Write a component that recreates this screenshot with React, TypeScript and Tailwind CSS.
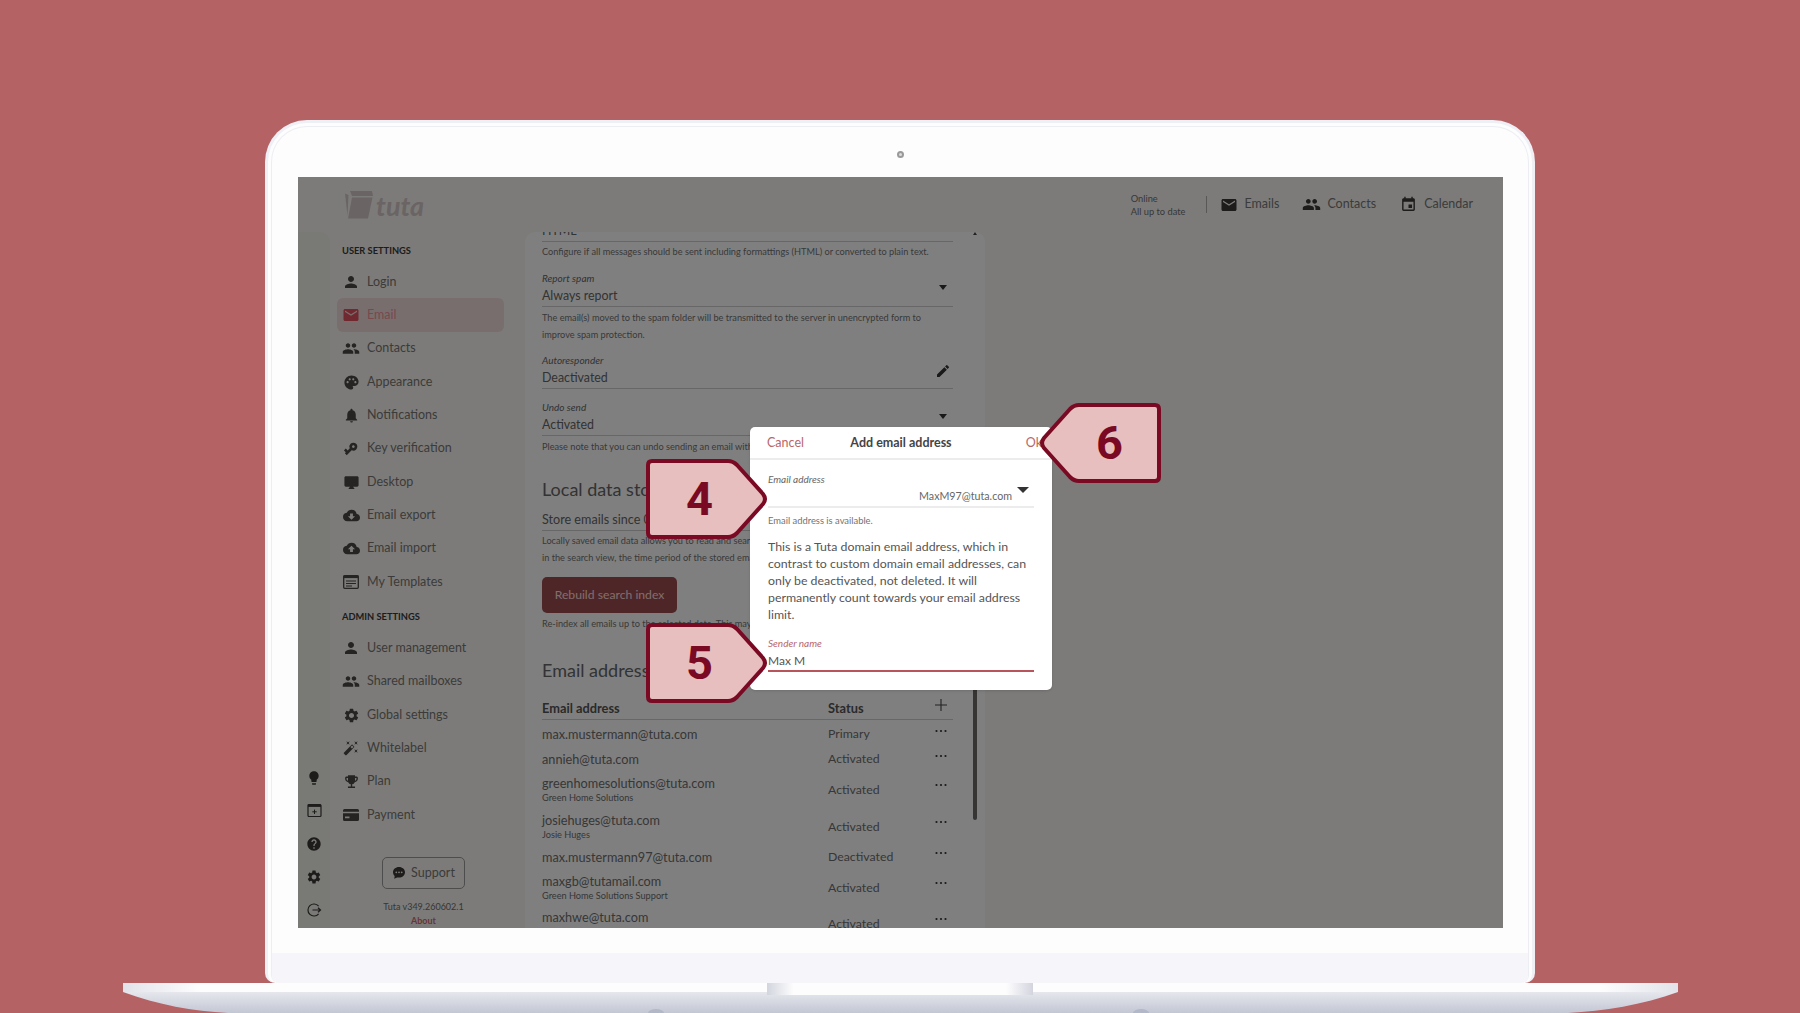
import type { ReactNode } from "react";
import {
  MdAutoFixHigh,
  MdCloudDownload,
  MdCloudUpload,
  MdDesktopMac,
  MdEdit,
  MdEmojiEvents,
  MdEvent,
  MdHelp,
  MdLightbulb,
  MdMail,
  MdNotifications,
  MdPalette,
  MdPeople,
  MdPerson,
  MdSettings,
  MdVpnKey,
} from "react-icons/md";

const TemplatesIcon = () => (
  <svg width="18" height="18" viewBox="0 0 18 18" fill="none" stroke="currentColor">
    <rect x="1.7" y="2.7" width="14.6" height="12.6" rx="1" strokeWidth="1.3" />
    <rect x="1.5" y="2.5" width="15" height="2.6" fill="currentColor" stroke="none" />
    <path d="M4 8h10M4 10.5h10M4 13h6" strokeWidth="1.1" />
  </svg>
);

const CalendarPlusIcon = () => (
  <svg width="15" height="15" viewBox="0 0 15 15" fill="none" stroke="currentColor">
    <rect x="1" y="1.5" width="13" height="12" rx="1" strokeWidth="1.2" />
    <rect x="1" y="1.5" width="13" height="2.4" fill="currentColor" stroke="none" />
    <path d="M7.5 6.6v4.4M5.3 8.8h4.4" strokeWidth="1" />
  </svg>
);

const LogoutIcon = () => (
  <svg width="16" height="16" viewBox="0 0 16 16" fill="none" stroke="currentColor" strokeWidth="1.2">
    <path d="M12.6 4.2A6 6 0 1 0 12.6 11.8" />
    <path d="M6.5 8H14.5M12 5.8L14.5 8L12 10.2" />
  </svg>
);

const CardIcon = () => (
  <svg width="18" height="18" viewBox="0 0 18 18" fill="currentColor">
    <path d="M2.5 3H15.500A1.500 1.500 0 0 1 17 4.500V5.800H1V4.500A1.500 1.500 0 0 1 2.500 3Z" />
    <path d="M1 7.200H17V13.500A1.500 1.500 0 0 1 15.500 15H2.500A1.500 1.500 0 0 1 1 13.500ZM3 10.500V12.300H7.500V10.500Z" fillRule="evenodd" />
  </svg>
);

const BubbleIcon = () => (
  <svg width="14" height="14" viewBox="0 0 14 14">
    <path d="M7 1C3.500 1 1 3.300 1 6.300C1 7.800 1.600 9.100 2.700 10L2.200 12.800L5.100 11.400C5.700 11.500 6.300 11.600 7 11.600C10.500 11.600 13 9.300 13 6.300C13 3.300 10.500 1 7 1Z" fill="currentColor" />
    <circle cx="4.300" cy="6.300" r="0.900" fill="#f8f7f3" />
    <circle cx="7" cy="6.300" r="0.900" fill="#f8f7f3" />
    <circle cx="9.700" cy="6.300" r="0.900" fill="#f8f7f3" />
  </svg>
);

const PlusIcon = () => (
  <svg width="14" height="14" viewBox="0 0 14 14" stroke="currentColor" strokeWidth="1.100">
    <path d="M7 1V13M1 7H13" />
  </svg>
);

const Dots = ({ className }: { className?: string }) => (
  <svg width="14" height="4" viewBox="0 0 14 4" fill="currentColor" className={className}>
    <circle cx="2.500" cy="2" r="1.100" />
    <circle cx="7" cy="2" r="1.100" />
    <circle cx="11.500" cy="2" r="1.100" />
  </svg>
);

const userNav = [
  { label: "Login", icon: <MdPerson size={18} /> },
  { label: "Email", icon: <MdMail size={18} />, active: true },
  { label: "Contacts", icon: <MdPeople size={19} /> },
  { label: "Appearance", icon: <MdPalette size={17} /> },
  { label: "Notifications", icon: <MdNotifications size={17} /> },
  { label: "Key verification", icon: <MdVpnKey size={16} className="rotate-[135deg]" /> },
  { label: "Desktop", icon: <MdDesktopMac size={17} /> },
  { label: "Email export", icon: <MdCloudDownload size={17} /> },
  { label: "Email import", icon: <MdCloudUpload size={17} /> },
  { label: "My Templates", icon: <TemplatesIcon /> },
];

const adminNav = [
  { label: "User management", icon: <MdPerson size={18} /> },
  { label: "Shared mailboxes", icon: <MdPeople size={19} /> },
  { label: "Global settings", icon: <MdSettings size={17} /> },
  { label: "Whitelabel", icon: <MdAutoFixHigh size={16} /> },
  { label: "Plan", icon: <MdEmojiEvents size={17} /> },
  { label: "Payment", icon: <CardIcon /> },
];

const addresses = [
  { email: "max.mustermann@tuta.com", status: "Primary", height: "h-[29px]" },
  { email: "annieh@tuta.com", status: "Activated", height: "h-[21px]" },
  { email: "greenhomesolutions@tuta.com", name: "Green Home Solutions", status: "Activated", height: "h-[40px]" },
  { email: "josiehuges@tuta.com", name: "Josie Huges", status: "Activated", height: "h-[34px]" },
  { email: "max.mustermann97@tuta.com", status: "Deactivated", height: "h-[26px]" },
  { email: "maxgb@tutamail.com", name: "Green Home Solutions Support", status: "Activated", height: "h-[36px]" },
  { email: "maxhwe@tuta.com", name: "Max Hwe", status: "Activated", height: "h-[36px]" },
];

const NavRow = ({ label, icon, active }: { label: string; icon: ReactNode; active?: boolean }) => (
  <div
    className={`ml-[7px] flex h-[33.33px] w-[167px] items-center gap-[7px] rounded-[6px] pl-[5px] pt-[1px] text-[12.5px] ${
      active ? "bg-[#f2dcdc] text-[#f29299]" : "text-[#787674]"
    }`}
  >
    <span className={`flex w-[18px] justify-center ${active ? "text-[#e0525f]" : "text-[#4a4846]"}`}>{icon}</span>
    {label}
  </div>
);

const SectionLabel = ({ children, className }: { children: ReactNode; className?: string }) => (
  <div className={`flex h-[22px] items-center pl-[12px] text-[9.3px] font-bold text-[#3c3a39] ${className ?? ""}`}>
    {children}
  </div>
);

const Field = ({ label, value, trailing, className }: { label: string; value: string; trailing?: ReactNode; className?: string }) => (
  <div className={`relative w-[411px] border-b border-[#cfcfcf] ${className ?? ""}`}>
    <div className="h-[14px] text-[10px] italic leading-[12px] text-[#666]">{label}</div>
    <div className="h-[20px] text-[12.4px] leading-[20px] text-[#666]">{value}</div>
    {trailing && <span className="absolute right-[1px] top-[5px] flex w-[18px] justify-center text-[#333]">{trailing}</span>}
  </div>
);

const Caret = () => <span className="mt-[8px] h-0 w-0 border-x-[4.5px] border-t-[5px] border-x-transparent border-t-[#333]" />;

const Help = ({ children, className }: { children: ReactNode; className?: string }) => (
  <p className={`w-[411px] whitespace-nowrap text-[9.2px] text-[#737373] ${className ?? ""}`}>{children}</p>
);

const Callout = ({ n, flip, className }: { n: string; flip?: boolean; className: string }) => (
  <div className={`absolute h-[80px] w-[122px] ${className}`}>
    <svg width="122" height="80" viewBox="0 0 122 80" className={flip ? "-scale-x-100" : ""}>
      <path
        d="M6 2H82q5 0 9 4L117 35q4 5 0 10L91 74q-4 4-9 4H6q-4 0-4-4V6q0-4 4-4Z"
        fill="#e7bfbe"
        stroke="#7a0a24"
        strokeWidth="4"
        strokeLinejoin="round"
      />
    </svg>
    <span
      className={`absolute inset-y-0 flex items-center text-[47px] font-bold text-[#7a0a24] [font-family:Roboto,sans-serif] ${
        flip ? "right-[38px]" : "left-[40px]"
      }`}
    >
      {n}
    </span>
  </div>
);

const LaptopBase = () => (
  <svg width="1555" height="30" viewBox="0 0 1555 30" className="ml-[123px] block">
    <defs>
      <linearGradient id="deck" x1="0" y1="0" x2="0" y2="1">
        <stop offset="0.3" stopColor="#e6e7ed" />
        <stop offset="1" stopColor="#c3c7d4" />
      </linearGradient>
      <linearGradient id="edge" x1="0" y1="0" x2="1" y2="0">
        <stop offset="0" stopColor="#e2e3ea" />
        <stop offset="0.05" stopColor="#fdfdfe" />
        <stop offset="0.95" stopColor="#fdfdfe" />
        <stop offset="1" stopColor="#e2e3ea" />
      </linearGradient>
      <linearGradient id="notch" x1="0" y1="0" x2="1" y2="0">
        <stop offset="0" stopColor="#d3d5de" />
        <stop offset="0.1" stopColor="#fdfdfe" />
        <stop offset="0.9" stopColor="#fdfdfe" />
        <stop offset="1" stopColor="#d3d5de" />
      </linearGradient>
    </defs>
    <path d="M0 0H1555V9C1520 22 1480 28 1445 30H105C70 28 35 22 0 9Z" fill="url(#deck)" />
    <rect width="1555" height="9" fill="url(#edge)" />
    <rect x="644" width="266" height="12" fill="url(#notch)" />
    <ellipse cx="533" cy="30" rx="8" ry="4" fill="#b3b8c9" />
    <ellipse cx="1018" cy="30" rx="8" ry="4" fill="#b3b8c9" />
  </svg>
);

export default function App() {
  return (
    <div className="h-[1013px] w-[1800px] overflow-hidden bg-[#b56265] pt-[120px] [font-family:Lato,'Noto_Sans',sans-serif]">
      {/* lid */}
      <div className="ml-[265px] h-[863px] w-[1270px] rounded-t-[42px] rounded-b-[10px] border-[3px] border-b-0 border-[#eff0f6] bg-[#fdfdfe] p-[3px] pb-0">
        <div className="flex h-full flex-col rounded-t-[36px] rounded-b-[8px] border border-b-0 border-[#eceef3]">
          <div className="flex h-[50px] items-center justify-center pt-[4px]">
            <span className="h-[7px] w-[7px] rounded-full border-2 border-[#9a9a9a] bg-[#dcdcdc]" />
          </div>
          {/* screen */}
          <div className="relative mx-[26px] h-[751px] w-[1205px] overflow-hidden bg-[#f8f7f3]">
            <header className="flex h-[55px]">
              <div className="ml-[47px] mt-[14px] flex h-[28px] items-center">
                <svg width="29" height="28" viewBox="0 0 29 28" fill="#d6c8c8">
                  <path d="M5 0H27L28 5H7Z" />
                  <path d="M7 6.500H27.500L23 27.500H3Z" />
                  <path d="M0 2.500L3.500 4L2.500 25Z" />
                </svg>
                <span className="ml-[2px] text-[27px] font-bold italic leading-none text-[#d6c8c8]">tuta</span>
              </div>
              <div className="ml-auto mr-[30px] flex items-center text-[#777]">
                <div className="mr-[21px] text-[9.3px] leading-[13px] text-[#707070]">
                  <div>Online</div>
                  <div>All up to date</div>
                </div>
                <span className="mr-[13px] h-[17px] w-px bg-[#b0b0b0]" />
                <MdMail size={18} className="text-[#3a3837]" />
                <span className="ml-[6px] text-[12.5px]">Emails</span>
                <MdPeople size={19} className="ml-[23px] text-[#3a3837]" />
                <span className="ml-[6px] text-[12.5px]">Contacts</span>
                <MdEvent size={17} className="ml-[24px] text-[#3a3837]" />
                <span className="ml-[7px] text-[12.5px]">Calendar</span>
              </div>
            </header>

            <div className="flex h-[696px]">
              {/* left rail */}
              <div className="flex w-[32px] flex-col items-center gap-[17.33px] rounded-tr-[10px] bg-[#f3f2ec] pt-[538px] text-[#3a3837]">
                <MdLightbulb size={16} />
                <CalendarPlusIcon />
                <MdHelp size={16} />
                <MdSettings size={16} />
                <LogoutIcon />
              </div>

              {/* sidebar */}
              <aside className="w-[195px] pt-[8px]">
                <SectionLabel className="mb-[3px]">USER SETTINGS</SectionLabel>
                {userNav.map((item) => (
                  <NavRow key={item.label} {...item} />
                ))}
                <SectionLabel className="mb-[3px] mt-[8px]">ADMIN SETTINGS</SectionLabel>
                {adminNav.map((item) => (
                  <NavRow key={item.label} {...item} />
                ))}
                <div className="ml-[52px] mt-[26px] flex h-[32px] w-[83px] items-center justify-center gap-[5px] rounded-[5px] border border-[#9a9a9a] text-[12.5px] text-[#777]">
                  <span className="text-[#3a3837]">
                    <BubbleIcon />
                  </span>
                  Support
                </div>
                <div className="mt-[11px] h-[14px] w-[187px] text-center text-[9px] leading-[14px] text-[#6e6e6e]">
                  Tuta v349.260602.1
                </div>
                <div className="h-[13px] w-[187px] text-center text-[9px] font-bold leading-[13px] text-[#d06a72]">About</div>
              </aside>

              {/* settings panel */}
              <main className="relative w-[460px] overflow-hidden rounded-t-[10px] bg-white pl-[17px]">
                <div className="flex h-[10px] w-[411px] items-end overflow-hidden border-b border-[#cfcfcf] text-[12.4px] leading-[20px] text-[#666]">
                  <span className="h-[20px] shrink-0">HTML</span>
                </div>
                <Help className="leading-[20px]">Configure if all messages should be sent including formattings (HTML) or converted to plain text.</Help>

                <Field className="mt-[10px]" label="Report spam" value="Always report" trailing={<Caret />} />
                <Help className="mt-[2px] leading-[17px]">
                  The email(s) moved to the spam folder will be transmitted to the server in unencrypted form to
                  <br />
                  improve spam protection.
                </Help>

                <Field className="mt-[11px]" label="Autoresponder" value="Deactivated" trailing={<MdEdit size={16} className="mt-[4px]" />} />
                <Field className="mt-[12px]" label="Undo send" value="Activated" trailing={<Caret />} />
                <Help className="mt-[2px] leading-[17px]">Please note that you can undo sending an email within a time frame.</Help>

                <h2 className="mt-[20px] h-[30px] text-[18px] leading-[28px] text-[#666]">Local data storage</h2>
                <div className="mt-[5px] h-[21px] w-[411px] border-b border-[#cfcfcf] text-[12.6px] leading-[20px] text-[#666]">Store emails since 01/01/2025</div>
                <Help className="mt-[2px] leading-[16.5px]">
                  Locally saved email data allows you to read and search emails offline.
                  <br />
                  in the search view, the time period of the stored emails can be changed.
                </Help>
                <button className="mt-[11px] h-[36px] w-[135px] rounded-[5px] bg-[#9e4c4e] text-[12.2px] text-[#ffdcdc]">Rebuild search index</button>
                <Help className="mt-[2px] leading-[17px]">Re-index all emails up to the selected date. This may take a while.</Help>

                <h2 className="mt-[24px] h-[30px] text-[18px] leading-[28px] text-[#666]">Email addresses</h2>
                <div className="mt-[13px] flex h-[21px] w-[411px] items-center border-b border-[#cfcfcf] text-[12.8px] font-bold text-[#555]">
                  <span className="w-[286px]">Email address</span>
                  <span className="w-[106px]">Status</span>
                  <span className="mb-[8px] text-[#444]">
                    <PlusIcon />
                  </span>
                </div>
                {addresses.map((row) => (
                  <div key={row.email} className={`flex w-[411px] items-center text-[#6e6e6e] ${row.height}`}>
                    <div className="w-[286px]">
                      <div className="text-[12.7px] leading-[15px]">{row.email}</div>
                      {row.name && <div className="text-[9.2px] leading-[14px]">{row.name}</div>}
                    </div>
                    <span className="w-[106px] text-[12.3px]">{row.status}</span>
                    <Dots className={`text-[#333] ${row.name ? "mb-[10px]" : "mb-[8px]"}`} />
                  </div>
                ))}

                <span className="absolute right-[8px] top-[0px] h-0 w-0 border-x-[2.5px] border-b-[3px] border-x-transparent border-b-[#444]" />
                <span className="absolute right-[8px] top-[300px] h-[288px] w-[4px] rounded-full bg-[#6e6868]" />
              </main>
            </div>

            {/* dim layer under the dialog */}
            <div className="absolute inset-0 bg-black/50" />

            <div className="absolute left-[452px] top-[250px] h-[263px] w-[302px] rounded-[5px] bg-white shadow-sm">
              <div className="flex h-[33px] items-center border-b-2 border-[#ececec] pl-[17px] pr-[10px] pt-[1px] text-[12.5px]">
                <span className="w-[50px] text-[#b8666a]">Cancel</span>
                <span className="flex-1 whitespace-nowrap text-center font-bold text-[#444]">Add email address</span>
                <span className="w-[57px] text-right text-[#b8666a]">Ok</span>
              </div>
              <div className="px-[18px]">
                <div className="relative h-[48px] border-b-2 border-[#ececec]">
                  <div className="pt-[13px] text-[10px] italic leading-[13px] text-[#666]">Email address</div>
                  <div className="absolute right-[22px] top-[28px] text-[10.7px] text-[#666]">MaxM97@tuta.com</div>
                  <span className="absolute right-[5px] top-[27px] h-0 w-0 border-x-[6px] border-t-[6px] border-x-transparent border-t-[#333]" />
                </div>
                <div className="mt-[6px] h-[14px] text-[9.4px] leading-[14px] text-[#737373]">Email address is available.</div>
                <p className="mt-[10px] text-[12.35px] leading-[17px] text-[#555]">
                  This is a Tuta domain email address, which in contrast to custom domain email addresses, can only be
                  deactivated, not deleted. It will permanently count towards your email address limit.
                </p>
                <div className="mt-[13px] h-[14px] text-[10px] italic leading-[14px] text-[#b8666a]">Sender name</div>
                <div className="h-[22px] border-b-2 border-[#b8555a] text-[12px] leading-[22px] text-[#555]">Max M</div>
              </div>
            </div>

            <Callout n="4" className="left-[348px] top-[282px]" />
            <Callout n="5" className="left-[348px] top-[446px]" />
            <Callout n="6" flip className="left-[741px] top-[226px]" />
          </div>
          <div className="mt-[25px] h-[30px] flex-1 rounded-b-[8px] bg-[#f5f5fa]" />
        </div>
      </div>
      <LaptopBase />
    </div>
  );
}
